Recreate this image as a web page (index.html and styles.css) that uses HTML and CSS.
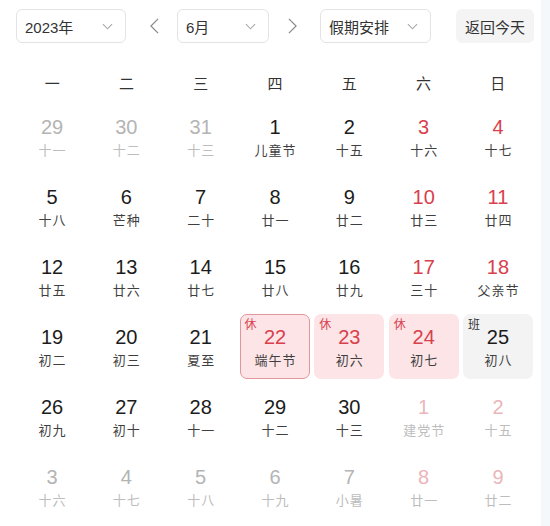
FILE: index.html
```html
<!DOCTYPE html>
<html lang="zh-CN">
<head>
<meta charset="utf-8">
<title>万年历</title>
<link rel="stylesheet" href="styles.css">
</head>
<body>
<div class="page">
  <div class="toolbar">
    <div class="select sel-year"><span>2023年</span><svg class="chev" viewBox="0 0 12 7"><polyline points="1,1 6,6 11,1"/></svg></div>
    <div class="arrow arrow-left"><svg viewBox="0 0 10 18"><polyline points="9,1 1,9 9,17"/></svg></div>
    <div class="select sel-month"><span>6月</span><svg class="chev" viewBox="0 0 12 7"><polyline points="1,1 6,6 11,1"/></svg></div>
    <div class="arrow arrow-right"><svg viewBox="0 0 10 18"><polyline points="1,1 9,9 1,17"/></svg></div>
    <div class="select sel-holiday"><span>假期安排</span><svg class="chev" viewBox="0 0 12 7"><polyline points="1,1 6,6 11,1"/></svg></div>
    <div class="today">返回今天</div>
  </div>

  <div class="weekdays">
    <div>一</div><div>二</div><div>三</div><div>四</div><div>五</div><div>六</div><div>日</div>
  </div>

  <div class="grid">
    <div class="cell other"><div class="num">29</div><div class="lunar">十一</div></div>
    <div class="cell other"><div class="num">30</div><div class="lunar">十二</div></div>
    <div class="cell other"><div class="num">31</div><div class="lunar">十三</div></div>
    <div class="cell"><div class="num">1</div><div class="lunar">儿童节</div></div>
    <div class="cell"><div class="num">2</div><div class="lunar">十五</div></div>
    <div class="cell weekend"><div class="num">3</div><div class="lunar">十六</div></div>
    <div class="cell weekend"><div class="num">4</div><div class="lunar">十七</div></div>

    <div class="cell"><div class="num">5</div><div class="lunar">十八</div></div>
    <div class="cell"><div class="num">6</div><div class="lunar">芒种</div></div>
    <div class="cell"><div class="num">7</div><div class="lunar">二十</div></div>
    <div class="cell"><div class="num">8</div><div class="lunar">廿一</div></div>
    <div class="cell"><div class="num">9</div><div class="lunar">廿二</div></div>
    <div class="cell weekend"><div class="num">10</div><div class="lunar">廿三</div></div>
    <div class="cell weekend"><div class="num">11</div><div class="lunar">廿四</div></div>

    <div class="cell"><div class="num">12</div><div class="lunar">廿五</div></div>
    <div class="cell"><div class="num">13</div><div class="lunar">廿六</div></div>
    <div class="cell"><div class="num">14</div><div class="lunar">廿七</div></div>
    <div class="cell"><div class="num">15</div><div class="lunar">廿八</div></div>
    <div class="cell"><div class="num">16</div><div class="lunar">廿九</div></div>
    <div class="cell weekend"><div class="num">17</div><div class="lunar">三十</div></div>
    <div class="cell weekend"><div class="num">18</div><div class="lunar">父亲节</div></div>

    <div class="cell"><div class="num">19</div><div class="lunar">初二</div></div>
    <div class="cell"><div class="num">20</div><div class="lunar">初三</div></div>
    <div class="cell"><div class="num">21</div><div class="lunar">夏至</div></div>
    <div class="cell rest selected"><span class="tag">休</span><div class="num">22</div><div class="lunar">端午节</div></div>
    <div class="cell rest"><span class="tag">休</span><div class="num">23</div><div class="lunar">初六</div></div>
    <div class="cell rest"><span class="tag">休</span><div class="num">24</div><div class="lunar">初七</div></div>
    <div class="cell work"><span class="tag">班</span><div class="num">25</div><div class="lunar">初八</div></div>

    <div class="cell"><div class="num">26</div><div class="lunar">初九</div></div>
    <div class="cell"><div class="num">27</div><div class="lunar">初十</div></div>
    <div class="cell"><div class="num">28</div><div class="lunar">十一</div></div>
    <div class="cell"><div class="num">29</div><div class="lunar">十二</div></div>
    <div class="cell"><div class="num">30</div><div class="lunar">十三</div></div>
    <div class="cell other weekend"><div class="num">1</div><div class="lunar">建党节</div></div>
    <div class="cell other weekend"><div class="num">2</div><div class="lunar">十五</div></div>

    <div class="cell other"><div class="num">3</div><div class="lunar">十六</div></div>
    <div class="cell other"><div class="num">4</div><div class="lunar">十七</div></div>
    <div class="cell other"><div class="num">5</div><div class="lunar">十八</div></div>
    <div class="cell other"><div class="num">6</div><div class="lunar">十九</div></div>
    <div class="cell other"><div class="num">7</div><div class="lunar">小暑</div></div>
    <div class="cell other weekend"><div class="num">8</div><div class="lunar">廿一</div></div>
    <div class="cell other weekend"><div class="num">9</div><div class="lunar">廿二</div></div>
  </div>
</div>
</body>
</html>
```

FILE: styles.css
```css
html, body {
  margin: 0;
  padding: 0;
}
body {
  background: #f4f8fb;
  font-family: "Liberation Sans", Arial, "Noto Sans CJK SC", sans-serif;
  color: #222;
}
.page {
  width: 541px;
  height: 526px;
  background: #fff;
  padding: 9px 0 0 16px;
  box-sizing: border-box;
}
.toolbar {
  display: flex;
  align-items: center;
  height: 34px;
}
.select {
  height: 34px;
  box-sizing: border-box;
  border: 1px solid #e3e3e3;
  border-radius: 6px;
  display: flex;
  align-items: center;
  justify-content: space-between;
  padding: 0 12px 0 8px;
  font-size: 15px;
  color: #333;
  font-family: "Liberation Sans", Arial, "Noto Sans CJK SC", sans-serif;
}
.sel-year { width: 110px; }
.sel-month { width: 92px; }
.sel-holiday { width: 111px; }
.chev {
  width: 11px;
  height: 7px;
  fill: none;
  stroke: #a8a8a8;
  stroke-width: 1.2;
}
.arrow {
  width: 51px;
  height: 34px;
  display: flex;
  align-items: center;
}
.arrow svg {
  width: 9px;
  height: 16px;
  fill: none;
  stroke: #8a8a8a;
  stroke-width: 1.4;
}
.arrow-left { justify-content: flex-start; padding-left: 24px; box-sizing: border-box; }
.arrow-right { justify-content: flex-start; padding-left: 19px; box-sizing: border-box; }
.today {
  margin-left: 25px;
  width: 78px;
  height: 34px;
  border-radius: 6px;
  background: #f4f4f5;
  color: #333;
  font-size: 15px;
  display: flex;
  align-items: center;
  justify-content: center;
}
.weekdays {
  margin: 24px 0 0 1px;
  display: grid;
  grid-template-columns: repeat(7, 1fr);
  column-gap: 4px;
  width: 516px;
  height: 30px;
  align-items: center;
  text-align: center;
  font-size: 15px;
  color: #333;
  font-family: "Noto Sans CJK SC", sans-serif;
}
.grid {
  margin: 7px 0 0 1px;
  display: grid;
  grid-template-columns: repeat(7, 1fr);
  column-gap: 4.3px;
  row-gap: 5px;
  width: 516px;
}
.cell {
  position: relative;
  height: 65px;
  box-sizing: border-box;
  padding-top: 12px;
  border-radius: 7px;
  display: flex;
  flex-direction: column;
  align-items: center;
}
.num {
  font-size: 20px;
  line-height: 22px;
  color: #1c1c1c;
}
.lunar {
  margin-top: 4px;
  font-size: 13px;
  line-height: 16px;
  letter-spacing: 1px;
  margin-right: -1px;
  color: #3f3f3f;
  font-family: "Noto Sans CJK SC", sans-serif;
}
.weekend .num { color: #d8404d; }
.other .num { color: #b4b4b4; }
.other .lunar { color: #bdbdbd; }
.other.weekend .num { color: #ebb5ba; }
.rest { background: #fde4e6; }
.rest .num { color: #d8404d; }
.selected { border: 1.5px solid #e3959c; padding-top: 10.5px; }
.work { background: #f3f3f3; }
.tag {
  position: absolute;
  left: 5px;
  top: 3px;
  font-size: 12px;
  line-height: 13px;
  font-family: "Noto Sans CJK SC", sans-serif;
}
.rest .tag { color: #d8404d; }
.selected .tag { left: 3.5px; top: 1.5px; }
.work .tag { color: #333; }
```
